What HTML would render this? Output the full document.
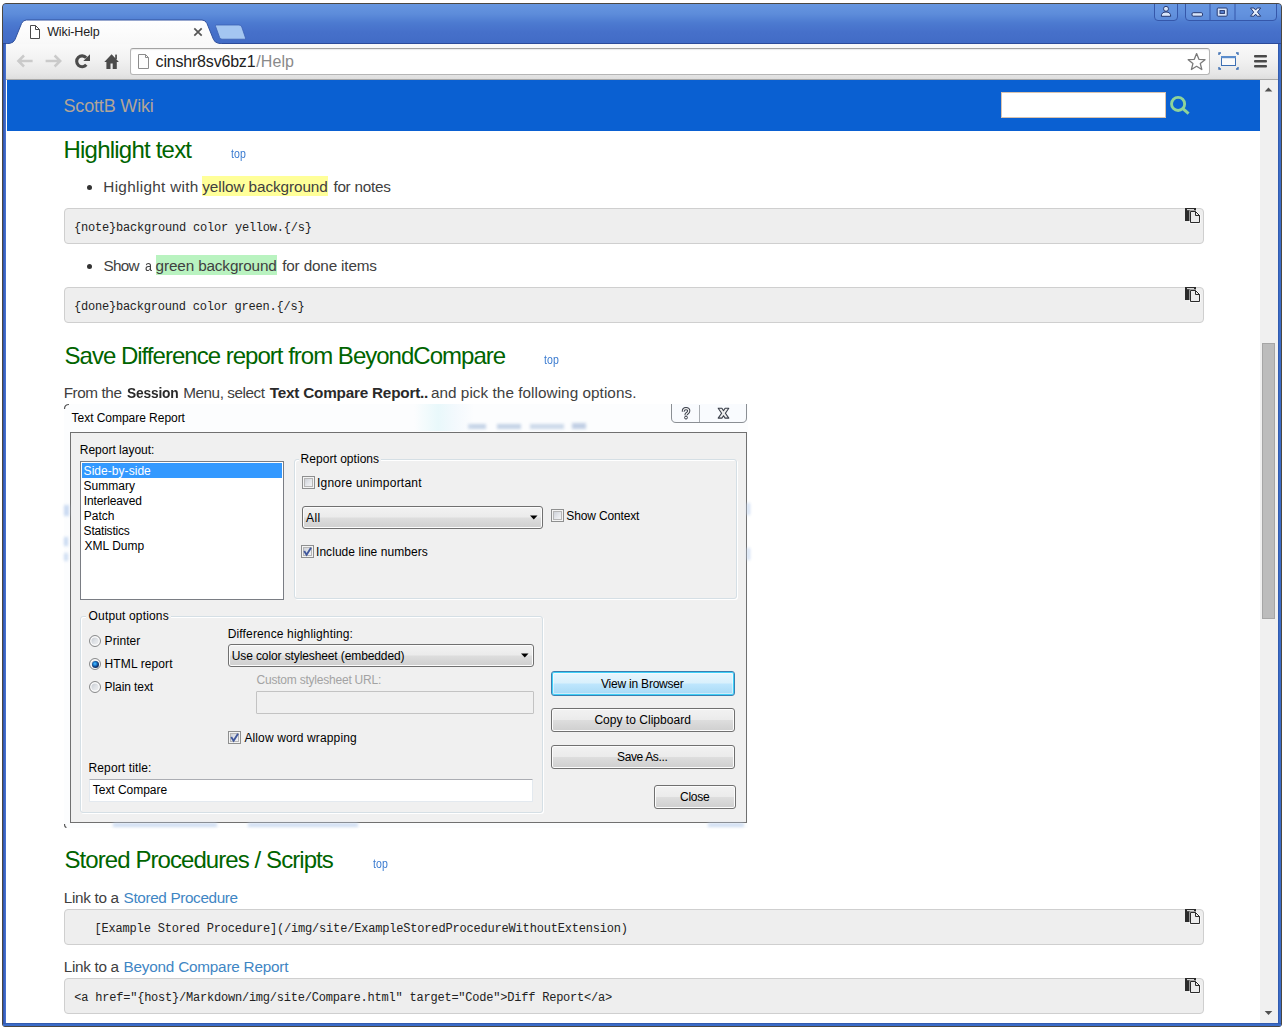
<!DOCTYPE html>
<html>
<head>
<meta charset="utf-8">
<title>Wiki-Help</title>
<style>
*{box-sizing:border-box;margin:0;padding:0}
html,body{width:1282px;height:1029px;overflow:hidden;background:#fff;font-family:"Liberation Sans",sans-serif;color:#333}
body{position:relative}
.a{position:absolute}
svg{position:absolute;overflow:visible}
.t,.h,.tp,.p,.c,.d{position:absolute;white-space:pre;line-height:20px;height:20px}
#win{left:2px;top:3px;width:1280px;height:1024px;background:#3b6bc8;border:1px solid #4b4741;border-radius:4px 4px 3px 3px;}
#frame{left:3px;top:4px;width:1278px;height:40px;border-radius:3px 3px 0 0;background:linear-gradient(#6696e0 0px,#5d8cda 10px,#4c7ad0 19px,#4670ca 28px,#426cc6 38.500px,#2c4b9a 39.300px,#2c4b9a 40px)}
#lb{left:3px;top:44px;width:3px;height:979px;background:linear-gradient(90deg,#2b4f9e,#3a5fc0 40%,#4a78d4)}
#rb{left:1278px;top:44px;width:3px;height:979px;background:linear-gradient(90deg,#2b4f9e,#3b6cc8 40%,#3b6cc8)}
#bb{left:3px;top:1023px;width:1278px;height:3px;background:linear-gradient(#2b4f9e,#3b6cc8 40%,#3b6cc8)}
#toolbar{left:6px;top:44px;width:1272px;height:36px;background:linear-gradient(#fafafa,#f3f3f3 40%,#e6e6e6 85%,#dedede);border-bottom:1px solid #a8a8a8}
#page{left:6px;top:80px;width:1254px;height:943px;background:#fff}
#sb{left:1260px;top:80px;width:18px;height:943px;background:#f0f0f0}
#thumb{left:1262px;top:343px;width:13px;height:276px;background:#bcbcbc;border:1px solid #a6a6a6}
#omni{left:130px;top:48px;width:1080px;height:27px;background:#fff;border:1px solid #b5b5b5;border-top-color:#a2a2a2;border-radius:3px;box-shadow:inset 0 1px 1px rgba(0,0,0,.08)}
#hdr{left:7px;top:80px;width:1253px;height:51px;background:#0a60d2}
#search{left:1001px;top:92px;width:165px;height:26px;background:#fff;border:1px solid #d9c3ae}
.h{font-size:24px;color:#006400}
.tp{font-size:12px;color:#3a7bd0;transform:scaleX(.88);transform-origin:0 0}
.p{font-size:15.300px;color:#404040}
.p b,.pb{font-weight:bold;color:#2a2a2a}
.lk{color:#3f86c4}
.pre{position:absolute;left:64px;width:1140px;height:36px;background:#eeeeee;border:1px solid #cfcfcf;border-radius:4px}
.c{font-family:"Liberation Mono",monospace;font-size:12px;color:#222}
.dot{position:absolute;width:5px;height:5px;border-radius:50%;background:#333}
.hl{position:absolute;height:20px}
.d{font-size:12px;color:#000}
.cp{position:absolute;width:15px;height:15px}
/* dialog */
#dimg{left:64px;top:404px;width:684px;height:424px;background:#fcfdfe;overflow:hidden}
#dcl{left:70px;top:432px;width:677px;height:391px;background:#f0f0f0;border:1px solid #707070}
.gb{position:absolute;border:1px solid #d5dfe5;border-radius:3px;box-shadow:inset 1px 1px 0 #fff,1px 1px 0 #fff}
.cb{position:absolute;width:13px;height:13px;border:1px solid #8e8f8f;background:linear-gradient(135deg,#c2c6ce,#e6e8ec 55%,#fbfbfb);box-shadow:inset 0 0 0 1px #f4f4f4,inset 0 0 0 2px #b6b6b6}
.rd{position:absolute;width:12px;height:12px;border-radius:50%;border:1px solid #8a8b8c;background:linear-gradient(135deg,#bcc1c9,#dfe2e6 50%,#f4f4f4);box-shadow:inset 0 0 0 1.400px #fbfbfb}
.cmb{position:absolute;height:23px;border:1px solid #707070;border-radius:3px;background:linear-gradient(#f2f2f2,#ebebeb 48%,#dddddd 52%,#cfcfcf);box-shadow:inset 0 0 0 1px #fcfcfc}
.btn{position:absolute;border:1px solid #707070;border-radius:3px;background:linear-gradient(#f2f2f2,#ebebeb 48%,#dddddd 52%,#cfcfcf);box-shadow:inset 0 0 0 1px #fcfcfc}
</style>
</head>
<body>
<div id="win" class="a"></div>
<div id="frame" class="a"></div>
<div id="lb" class="a"></div><div id="rb" class="a"></div><div id="bb" class="a"></div>
<div id="toolbar" class="a"></div>
<div id="omni" class="a"></div>
<svg class="a" style="left:0;top:0" width="1282" height="80" viewBox="0 0 1282 80">
  <defs>
    <linearGradient id="tabg" x1="0" y1="0" x2="0" y2="1"><stop offset="0" stop-color="#ffffff"/><stop offset="1" stop-color="#f8f8f8"/></linearGradient>
  </defs>
  <!-- new tab button -->
  <path d="M216.5 25 L239 25 Q241 25 241.8 27 L245.5 38 Q245.8 39.2 244.5 39.2 L222 39.2 Q220.3 39.2 219.6 37.5 L215.5 26.2 Q215.2 25 216.5 25 Z" fill="#a4c6f1" stroke="#3b60b4" stroke-width="0.8"/>
  <!-- active tab -->
  <path d="M6 43.800 L10 43.300 Q13.500 42.800 15 39.500 L21.500 23.500 Q23 20 26.500 20 L202 20 Q205.500 20 207 23.500 L213.500 39.500 Q215 42.800 218.500 43.300 L222 43.800 L222 44.500 L6 44.500 Z" fill="url(#tabg)" stroke="#33539f" stroke-width="1"/>
  <rect x="6" y="44" width="217" height="1.5" fill="#f9f9f9"/>
  <!-- tab page icon -->
  <path d="M30.500 25.500 L35.500 25.500 L39.500 29.500 L39.500 38.500 L30.500 38.500 Z" fill="#fff" stroke="#4a4a4a" stroke-width="1"/>
  <path d="M35.500 25.500 L35.500 29.500 L39.500 29.500" fill="none" stroke="#4a4a4a" stroke-width="1"/>
  <!-- tab close -->
  <path d="M194.3 28.3 L201.7 35.7 M201.7 28.3 L194.3 35.7" stroke="#555" stroke-width="1.7" fill="none"/>
  <!-- back -->
  <path d="M24 55.500 L18.400 61 L24 66.500 M18.800 61 L32.600 61" fill="none" stroke="#cacaca" stroke-width="2.500" stroke-linejoin="miter"/>
  <!-- forward -->
  <path d="M54.600 55.500 L60.200 61 L54.600 66.500 M59.800 61 L45.600 61" fill="none" stroke="#cacaca" stroke-width="2.500" stroke-linejoin="miter"/>
  <!-- reload -->
  <path d="M86.200 57.800 A5.400 5.400 0 1 0 86.300 64.700" fill="none" stroke="#4b4b4b" stroke-width="3.100"/>
  <path d="M90 54.300 L90 61 L83.300 61 Z" fill="#4b4b4b"/>
  <!-- home -->
  <path d="M111.600 54.300 L118.900 61.900 L116.800 61.900 L116.800 69 L112.700 69 L112.700 63.600 L110.500 63.600 L110.500 69 L106.400 69 L106.400 61.900 L104.300 61.900 Z" fill="#4b4b4b"/>
  <rect x="115.200" y="54.600" width="1.700" height="4.500" fill="#4b4b4b"/>
  <!-- omnibox page icon -->
  <path d="M138.5 54.5 L145.5 54.5 L148.5 57.5 L148.5 68.5 L138.5 68.5 Z" fill="#fdfdfd" stroke="#8c8c8c" stroke-width="1"/>
  <path d="M145.5 54.5 L145.5 57.5 L148.5 57.5" fill="none" stroke="#8c8c8c" stroke-width="1"/>
  <!-- star -->
  <path d="M1196.600 53.600 L1198.900 59.300 L1205 59.700 L1200.300 63.600 L1201.800 69.500 L1196.600 66.300 L1191.400 69.500 L1192.900 63.600 L1188.200 59.700 L1194.300 59.300 Z" fill="#fff" stroke="#7a7a7a" stroke-width="1.300" stroke-linejoin="round"/>
  <!-- screen icon -->
  <rect x="1221.5" y="56.5" width="14" height="9" fill="#fafafa" stroke="#3d6fb3" stroke-width="1"/>
  <rect x="1221" y="56" width="15" height="2.2" fill="#5a8ccc"/>
  <path d="M1219 55 L1219 53 L1221 53 M1236 53 L1238 53 L1238 55 M1219 67 L1219 69 L1221 69 M1236 69 L1238 69 L1238 67" fill="none" stroke="#3d6fb3" stroke-width="1.4"/>
  <!-- menu -->
  <rect x="1254" y="55" width="13" height="2.6" rx="1" fill="#4a4a4a"/>
  <rect x="1254" y="60" width="13" height="2.6" rx="1" fill="#4a4a4a"/>
  <rect x="1254" y="65" width="13" height="2.6" rx="1" fill="#4a4a4a"/>
  <!-- caption buttons -->
  <path d="M1154.500 4 L1154.500 17 Q1154.500 20.500 1158 20.500 L1174 20.500 Q1177.500 20.500 1177.500 17 L1177.500 4" fill="#6a98e2" fill-opacity=".45" stroke="#3557aa" stroke-width="1"/>
  <path d="M1185.500 4 L1185.500 17 Q1185.500 20.500 1189 20.500 L1273 20.500 Q1276.500 20.500 1276.500 17 L1276.500 4" fill="#6a98e2" fill-opacity=".45" stroke="#3557aa" stroke-width="1"/>
  <path d="M1210 4 L1210 20 M1235 4 L1235 20" stroke="#3557aa" stroke-width="1"/>
  <circle cx="1166" cy="8.800" r="2.500" fill="#d9e6fa" stroke="#273a72" stroke-width="1"/>
  <path d="M1161.300 16.300 Q1161.300 12 1166 12 Q1170.700 12 1170.700 16.300 Z" fill="#d9e6fa" stroke="#273a72" stroke-width="1" stroke-linejoin="round"/>
  <rect x="1192" y="12.700" width="10.500" height="3.500" rx="1.200" fill="#d9e6fa" stroke="#273a72" stroke-width="1"/>
  <rect x="1217.200" y="8" width="10" height="8.200" rx="1" fill="#d9e6fa" stroke="#273a72" stroke-width="1"/>
  <rect x="1220" y="10.600" width="4.400" height="2.800" fill="#5a86d4" stroke="#273a72" stroke-width="1"/>
  <path d="M1250.500 8 L1254 8 L1255.600 10.100 L1257.200 8 L1260.700 8 L1257.500 12.100 L1260.700 16.200 L1257.200 16.200 L1255.600 14.100 L1254 16.200 L1250.500 16.200 L1253.700 12.100 Z" fill="#e6effc" stroke="#273a72" stroke-width="1" stroke-linejoin="round"/>
</svg>
<div id="page" class="a"></div>
<div id="sb" class="a"></div>
<div id="thumb" class="a"></div>
<svg class="a" style="left:1260px;top:80px" width="18" height="943" viewBox="0 0 18 943"><path d="M4.700 11.500 L8.500 7.500 L12.300 11.500 Z" fill="#505050"/><path d="M4.700 931 L12.300 931 L8.500 935 Z" fill="#505050"/></svg>
<div id="hdr" class="a"></div>
<div id="search" class="a"></div>
<svg class="a" style="left:1168px;top:94px" width="24" height="24" viewBox="1168 94 24 24"><circle cx="1178.100" cy="103.900" r="6.550" fill="none" stroke="#8fd399" stroke-width="2.900"/><path d="M1182.600 108.300 L1188.600 113.600" stroke="#8fd399" stroke-width="3"/></svg>
<div class="dot" style="left:87px;top:185px"></div>
<div class="hl" style="left:202px;top:176px;width:126px;background:#ffff99"></div>
<div class="pre" style="top:208px"></div>
<div class="dot" style="left:87px;top:264px"></div>
<div class="hl" style="left:156px;top:255px;width:121px;background:#b9f3c0"></div>
<div class="pre" style="top:287px"></div>
<div class="pre" style="top:909px;height:36px"></div>
<div class="pre" style="top:978px;height:36px"></div>
<svg class="a" style="left:1185px;top:208px" width="16" height="16" viewBox="0 0 16 16"><rect x="0" y="0" width="11" height="13" fill="#2b2b2b"/><rect x="2" y="1" width="7" height="1.200" fill="#d8d8d8"/><path d="M4.500 2.500 L11 2.500 L15.500 7 L15.500 15.500 L4.500 15.500 Z" fill="#fff"/><path d="M5.500 3.500 L10.500 3.500 L14.500 7.500 L14.500 14.500 L5.500 14.500 Z" fill="#ececec" stroke="#2b2b2b" stroke-width="1" stroke-linejoin="miter"/><path d="M10.500 3.500 L10.500 7.500 L14.500 7.500 Z" fill="#ececec" stroke="#2b2b2b" stroke-width="1"/></svg>
<svg class="a" style="left:1185px;top:287px" width="16" height="16" viewBox="0 0 16 16"><rect x="0" y="0" width="11" height="13" fill="#2b2b2b"/><rect x="2" y="1" width="7" height="1.200" fill="#d8d8d8"/><path d="M4.500 2.500 L11 2.500 L15.500 7 L15.500 15.500 L4.500 15.500 Z" fill="#fff"/><path d="M5.500 3.500 L10.500 3.500 L14.500 7.500 L14.500 14.500 L5.500 14.500 Z" fill="#ececec" stroke="#2b2b2b" stroke-width="1" stroke-linejoin="miter"/><path d="M10.500 3.500 L10.500 7.500 L14.500 7.500 Z" fill="#ececec" stroke="#2b2b2b" stroke-width="1"/></svg>
<svg class="a" style="left:1185px;top:909px" width="16" height="16" viewBox="0 0 16 16"><rect x="0" y="0" width="11" height="13" fill="#2b2b2b"/><rect x="2" y="1" width="7" height="1.200" fill="#d8d8d8"/><path d="M4.500 2.500 L11 2.500 L15.500 7 L15.500 15.500 L4.500 15.500 Z" fill="#fff"/><path d="M5.500 3.500 L10.500 3.500 L14.500 7.500 L14.500 14.500 L5.500 14.500 Z" fill="#ececec" stroke="#2b2b2b" stroke-width="1" stroke-linejoin="miter"/><path d="M10.500 3.500 L10.500 7.500 L14.500 7.500 Z" fill="#ececec" stroke="#2b2b2b" stroke-width="1"/></svg>
<svg class="a" style="left:1185px;top:978px" width="16" height="16" viewBox="0 0 16 16"><rect x="0" y="0" width="11" height="13" fill="#2b2b2b"/><rect x="2" y="1" width="7" height="1.200" fill="#d8d8d8"/><path d="M4.500 2.500 L11 2.500 L15.500 7 L15.500 15.500 L4.500 15.500 Z" fill="#fff"/><path d="M5.500 3.500 L10.500 3.500 L14.500 7.500 L14.500 14.500 L5.500 14.500 Z" fill="#ececec" stroke="#2b2b2b" stroke-width="1" stroke-linejoin="miter"/><path d="M10.500 3.500 L10.500 7.500 L14.500 7.500 Z" fill="#ececec" stroke="#2b2b2b" stroke-width="1"/></svg>
<div id="dimg" class="a">
  <div class="a" style="left:404px;top:20px;width:18px;height:5px;background:#c4d3e6;filter:blur(1.5px)"></div>
  <div class="a" style="left:433px;top:20px;width:24px;height:5px;background:#c4d3e6;filter:blur(1.5px)"></div>
  <div class="a" style="left:466px;top:20px;width:34px;height:5px;background:#ccd9ea;filter:blur(1.5px)"></div>
  <div class="a" style="left:508px;top:19px;width:14px;height:6px;background:#c0cfe4;filter:blur(1.5px)"></div>
  <div class="a" style="left:350px;top:0px;width:60px;height:27px;background:linear-gradient(90deg,rgba(225,245,250,0),rgba(228,247,250,.8) 40%,rgba(235,245,252,.5) 70%,rgba(235,245,252,0));"></div>
</div>
<div id="dcl" class="a"></div>
<svg class="a" style="left:63px;top:403px" width="8" height="8" viewBox="0 0 8 8"><path d="M1.500 6 Q1.500 1.500 6 1.500" fill="none" stroke="#555" stroke-width="1.200"/></svg>
<svg class="a" style="left:63px;top:821px" width="8" height="8" viewBox="0 0 8 8"><path d="M1.500 3 Q1.500 6.500 3.500 6.500" fill="none" stroke="#555" stroke-width="1.100"/></svg>
<div class="a" style="left:64px;top:505px;width:5px;height:11px;background:#bcd0ee;filter:blur(1.500px);opacity:.8"></div>
<div class="a" style="left:64px;top:537px;width:4px;height:9px;background:#bcd0ee;filter:blur(1.500px);opacity:.8"></div>
<div class="a" style="left:64px;top:553px;width:4px;height:8px;background:#bcd0ee;filter:blur(1.500px);opacity:.7"></div>
<div class="a" style="left:747px;top:503px;width:3px;height:12px;background:#c4d6f0;filter:blur(1.500px);opacity:.8"></div>
<div class="a" style="left:747px;top:548px;width:3px;height:12px;background:#c4d6f0;filter:blur(1.500px);opacity:.8"></div>
<div class="a" style="left:113px;top:823px;width:104px;height:4px;background:#c4d6f0;filter:blur(1.500px);opacity:.8"></div>
<div class="a" style="left:248px;top:823px;width:110px;height:4px;background:#c4d6f0;filter:blur(1.500px);opacity:.8"></div>
<div class="a" style="left:708px;top:823px;width:36px;height:4px;background:#c4d6f0;filter:blur(1.500px);opacity:.8"></div>
<!-- caption buttons -->
<svg class="a" style="left:664px;top:405px" width="90" height="24" viewBox="664 405 90 24">
  <path d="M671.500 404 L671.500 418 Q671.500 422.500 676 422.500 L742 422.500 Q746.500 422.500 746.500 418 L746.500 404" fill="#f9fbfe" stroke="#8b8f94" stroke-width="1"/>
  <path d="M699.500 405 L699.500 422" stroke="#a9adb2" stroke-width="1"/>
  <path d="M683.400 411.600 Q683.200 408.700 686 408.700 Q688.800 408.700 688.700 411 Q688.600 412.400 687.200 413.200 Q686 413.900 686 415.300" fill="none" stroke="#3a3f4a" stroke-width="3.300" stroke-linecap="butt"/>
  <path d="M683.400 411.600 Q683.200 408.700 686 408.700 Q688.800 408.700 688.700 411 Q688.600 412.400 687.200 413.200 Q686 413.900 686 415.300" fill="none" stroke="#f2f2f2" stroke-width="1.300" stroke-linecap="butt"/>
  <circle cx="686" cy="417.600" r="1.450" fill="#f2f2f2" stroke="#3a3f4a" stroke-width="1"/>
  <path d="M718.200 408.300 L721.900 408.300 L723.500 410.700 L725.100 408.300 L728.800 408.300 L725.400 413.200 L728.800 418.100 L725.100 418.100 L723.500 415.700 L721.900 418.100 L718.200 418.100 L721.600 413.200 Z" fill="#eeeeee" stroke="#3a3f4a" stroke-width="1.100" stroke-linejoin="round"/>
</svg>
<!-- listbox -->
<div class="a" style="left:80px;top:461px;width:204px;height:139px;background:#fff;border:1px solid #7a7d84"></div>
<div class="a" style="left:82px;top:463px;width:200px;height:15px;background:#3399ff"></div>
<!-- group boxes -->
<div class="gb" style="left:294px;top:459px;width:443px;height:140px"></div>
<div class="a" style="left:299px;top:452px;width:82px;height:14px;background:#f0f0f0"></div>
<div class="gb" style="left:80px;top:616px;width:463px;height:197px"></div>
<div class="a" style="left:86px;top:609px;width:85px;height:14px;background:#f0f0f0"></div>
<!-- checkboxes -->
<div class="cb" style="left:302px;top:476px"></div>
<div class="cb" style="left:551px;top:509px"></div>
<div class="cb" style="left:301px;top:545px"></div>
<div class="cb" style="left:228px;top:731px"></div>
<svg class="a" style="left:301px;top:545px" width="13" height="13" viewBox="0 0 13 13"><path d="M3.200 6 L5.600 9.800 L10 2.800" fill="none" stroke="#41589c" stroke-width="1.900"/></svg>
<svg class="a" style="left:228px;top:731px" width="13" height="13" viewBox="0 0 13 13"><path d="M3.200 6 L5.600 9.800 L10 2.800" fill="none" stroke="#41589c" stroke-width="1.900"/></svg>
<!-- combos -->
<div class="cmb" style="left:302px;top:506px;width:241px"></div>
<div class="cmb" style="left:228px;top:644px;width:306px"></div>
<svg class="a" style="left:530px;top:515px" width="8" height="5" viewBox="0 0 8 5"><path d="M0 .5 L7.500 .5 L3.750 4.500 Z" fill="#000"/></svg>
<svg class="a" style="left:521px;top:653px" width="8" height="5" viewBox="0 0 8 5"><path d="M0 .5 L7.500 .5 L3.750 4.500 Z" fill="#000"/></svg>
<!-- radios -->
<div class="rd" style="left:89px;top:635px"></div>
<div class="rd" style="left:89px;top:658px"></div>
<div class="rd" style="left:89px;top:681px"></div>
<div class="a" style="left:91.500px;top:660.500px;width:7px;height:7px;border-radius:50%;background:radial-gradient(circle at 42% 40%,#5fc0f4 0,#1c8ae0 25%,#15407f 52%,#0e2a5c 72%)"></div>
<!-- textboxes -->
<div class="a" style="left:256px;top:691px;width:278px;height:23px;background:#f0f0f0;border:1px solid #c3c3c3;border-radius:1px"></div>
<div class="a" style="left:89px;top:779px;width:444px;height:23px;background:#fff;border:1px solid #e3e9ef;border-top-color:#abadb3;border-radius:1px"></div>
<!-- buttons -->
<div class="btn" style="left:551px;top:671px;width:184px;height:25px;border-color:#3c7fb1;background:linear-gradient(#eaf6fd,#d9f0fc 48%,#bee6fd 52%,#a7d9f5);box-shadow:inset 0 0 0 1px #3fd0f8,inset 0 0 0 2px rgba(255,255,255,.45)"></div>
<div class="btn" style="left:551px;top:708px;width:184px;height:24px"></div>
<div class="btn" style="left:551px;top:745px;width:184px;height:24px"></div>
<div class="btn" style="left:654px;top:785px;width:82px;height:24px"></div>

<div class="t" style="left:47.2px;top:22px;letter-spacing:-0.125px;font-size:12.500px;color:#222">Wiki-Help</div>
<div class="t" style="left:155.6px;top:52px;letter-spacing:-0.192px;font-size:16px;color:#222">cinshr8sv6bz1</div>
<div class="t" style="left:256.3px;top:52px;letter-spacing:0.075px;font-size:16px;color:#8a8a8a">/Help</div>
<div class="t" style="left:63.5px;top:96px;letter-spacing:-0.17px;font-size:18px;color:#b3a597">ScottB Wiki</div>
<div class="h" style="left:63.5px;top:140px;letter-spacing:-0.785px;">Highlight text</div>
<div class="tp" style="left:231.2px;top:144px;letter-spacing:0.114px;">top</div>
<div class="p" style="left:103.3px;top:177px;letter-spacing:0.308px;">Highlight with</div>
<div class="p" style="left:202.3px;top:177px;letter-spacing:-0.075px;">yellow background</div>
<div class="p" style="left:333.4px;top:177px;letter-spacing:-0.262px;">for notes</div>
<div class="c" style="left:74px;top:218px;letter-spacing:-0.206px;">{note}background color yellow.{/s}</div>
<div class="p" style="left:103.5px;top:256px;letter-spacing:-0.7px;">Show</div>
<div class="p" style="left:145.4px;top:256px;letter-spacing:0.0px;transform:scaleX(.82);transform-origin:0 0">a</div>
<div class="p" style="left:155.6px;top:256px;letter-spacing:-0.14px;">green background</div>
<div class="p" style="left:282.2px;top:256px;letter-spacing:-0.162px;">for done items</div>
<div class="c" style="left:74px;top:297px;letter-spacing:-0.219px;">{done}background color green.{/s}</div>
<div class="h" style="left:64.5px;top:346px;letter-spacing:-0.988px;">Save Difference report from BeyondCompare</div>
<div class="tp" style="left:544.2px;top:350px;letter-spacing:0.114px;">top</div>
<div class="p" style="left:63.7px;top:383px;letter-spacing:-0.429px;">From the</div>
<div class="p" style="left:127.4px;top:383px;letter-spacing:-0.204px;font-weight:bold;color:#2a2a2a;transform:scaleX(.9);transform-origin:0 0">Session</div>
<div class="p" style="left:183.2px;top:383px;letter-spacing:-0.455px;">Menu, select</div>
<div class="p" style="left:269.7px;top:383px;letter-spacing:-0.215px;font-weight:bold;color:#2a2a2a">Text Compare Report..</div>
<div class="p" style="left:430.9px;top:383px;letter-spacing:0.047px;">and pick the following options.</div>
<div class="h" style="left:64.5px;top:850px;letter-spacing:-0.927px;">Stored Procedures / Scripts</div>
<div class="tp" style="left:373.3px;top:854px;letter-spacing:0.057px;">top</div>
<div class="p" style="left:63.7px;top:888px;letter-spacing:-0.312px;">Link to a</div>
<div class="p" style="left:123.6px;top:888px;letter-spacing:-0.36px;color:#3f86c4">Stored Procedure</div>
<div class="c" style="left:94.5px;top:919px;letter-spacing:-0.183px;">[Example Stored Procedure](/img/site/ExampleStoredProcedureWithoutExtension)</div>
<div class="p" style="left:63.7px;top:957px;letter-spacing:-0.312px;">Link to a</div>
<div class="p" style="left:123.6px;top:957px;letter-spacing:-0.22px;color:#3f86c4">Beyond Compare Report</div>
<div class="c" style="left:74.3px;top:988px;letter-spacing:-0.218px;">&lt;a href="{host}/Markdown/img/site/Compare.html" target="Code"&gt;Diff Report&lt;/a&gt;</div>
<div class="d" style="left:71.6px;top:408px;letter-spacing:-0.039px;">Text Compare Report</div>
<div class="d" style="left:79.8px;top:440px;letter-spacing:-0.008px;">Report layout:</div>
<div class="d" style="left:83.6px;top:461px;letter-spacing:0.045px;color:#fff">Side-by-side</div>
<div class="d" style="left:83.6px;top:476px;letter-spacing:0.017px;">Summary</div>
<div class="d" style="left:83.8px;top:491px;letter-spacing:-0.13px;">Interleaved</div>
<div class="d" style="left:83.8px;top:506px;letter-spacing:-0.025px;">Patch</div>
<div class="d" style="left:83.6px;top:521px;letter-spacing:-0.2px;">Statistics</div>
<div class="d" style="left:84.4px;top:536px;letter-spacing:0.043px;">XML Dump</div>
<div class="d" style="left:300.6px;top:449px;letter-spacing:0.031px;">Report options</div>
<div class="d" style="left:317px;top:473px;letter-spacing:0.224px;">Ignore unimportant</div>
<div class="d" style="left:306px;top:508px;letter-spacing:0.4px;">All</div>
<div class="d" style="left:316px;top:542px;letter-spacing:0.053px;">Include line numbers</div>
<div class="d" style="left:566.3px;top:506px;letter-spacing:-0.145px;">Show Context</div>
<div class="d" style="left:88.6px;top:606px;letter-spacing:0.154px;">Output options</div>
<div class="d" style="left:104.6px;top:631px;letter-spacing:0.067px;">Printer</div>
<div class="d" style="left:104.6px;top:654px;letter-spacing:0.1px;">HTML report</div>
<div class="d" style="left:104.6px;top:677px;letter-spacing:-0.089px;">Plain text</div>
<div class="d" style="left:227.7px;top:624px;letter-spacing:0.148px;">Difference highlighting:</div>
<div class="d" style="left:231.7px;top:646px;letter-spacing:-0.107px;">Use color stylesheet (embedded)</div>
<div class="d" style="left:256.6px;top:670px;letter-spacing:-0.224px;color:#a3a3a3">Custom stylesheet URL:</div>
<div class="d" style="left:244.4px;top:728px;letter-spacing:0.122px;">Allow word wrapping</div>
<div class="d" style="left:88.5px;top:758px;letter-spacing:0.125px;">Report title:</div>
<div class="d" style="left:92.8px;top:780px;letter-spacing:-0.036px;">Text Compare</div>
<div class="d" style="left:601px;top:674px;letter-spacing:-0.214px;">View in Browser</div>
<div class="d" style="left:594.4px;top:710px;letter-spacing:0.025px;">Copy to Clipboard</div>
<div class="d" style="left:617px;top:747px;letter-spacing:-0.367px;">Save As...</div>
<div class="d" style="left:680px;top:787px;letter-spacing:-0.25px;">Close</div>

</body>
</html>
